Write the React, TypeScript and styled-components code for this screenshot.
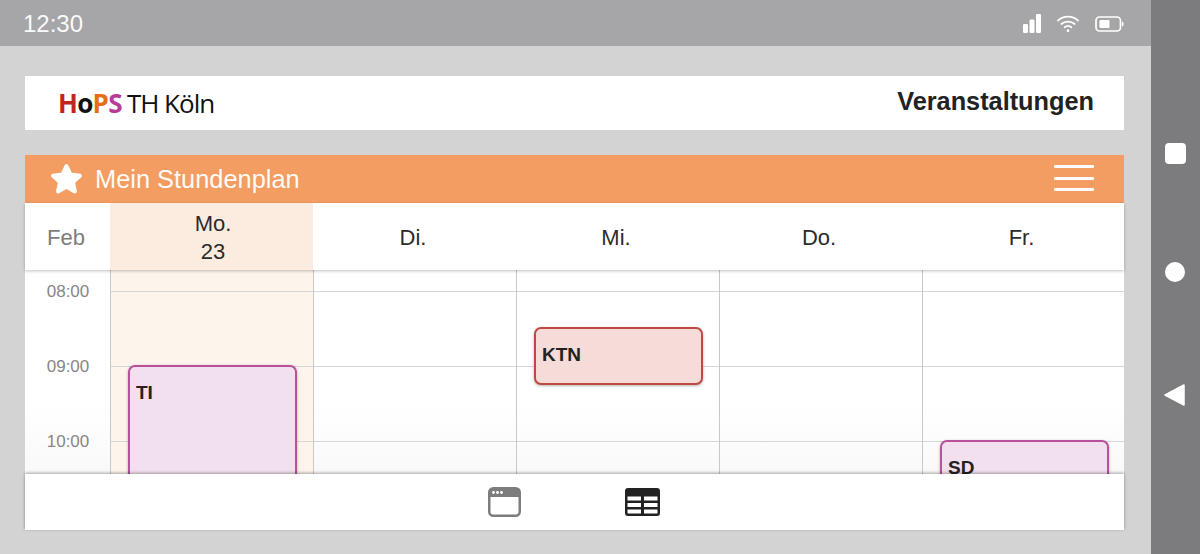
import styled, { createGlobalStyle } from "styled-components";

const GlobalStyle = createGlobalStyle`
    html, body {
        margin: 0;
        padding: 0;
        background: #d3d3d3;
    }
    body {
        font-family: "Liberation Sans", Arial, sans-serif;
    }
`;

const Device = styled.div`
    display: flex;
    width: 1200px;
    height: 554px;
    overflow: hidden;
`;

const Screen = styled.div`
    width: 1151px;
    display: flex;
    flex-direction: column;
    background: #d3d3d3;
`;

const StatusBar = styled.div`
    height: 46px;
    flex: none;
    box-sizing: border-box;
    display: flex;
    align-items: center;
    justify-content: space-between;
    padding: 2px 27px 0 23px;
    background: #a6a6a8;
    color: #fff;
`;

const Clock = styled.div`
    font-size: 24px;
    opacity: 0.95;
`;

const StatusIcons = styled.div`
    display: flex;
    align-items: center;
    gap: 16px;
    margin-top: -1px;
`;

const Content = styled.div`
    flex: 1;
    display: flex;
    flex-direction: column;
    padding: 30px 27px 24px 25px;
`;

const Header = styled.header`
    height: 54px;
    flex: none;
    display: flex;
    align-items: center;
    justify-content: space-between;
    padding: 0 30px 0 33px;
    margin-bottom: 25px;
    background: #fff;
`;

const Logo = styled.div`
    display: flex;
    align-items: baseline;
    gap: 5px;
    margin-top: -1px;
    font-family: "Open Sans", sans-serif;
    font-size: 26px;
    line-height: 54px;
    color: #111;
`;

const LogoMark = styled.span`
    font-weight: 700;
    letter-spacing: -0.7px;
`;

const LogoLetter = styled.span<{ $color: string }>`
    color: ${(p) => p.$color};
`;

const LogoName = styled.span`
    letter-spacing: -1px;
`;

const PageTitle = styled.h1`
    margin: 0 0 3px;
    font-size: 25.3px;
    font-weight: 700;
    color: #222;
`;

const TitleBar = styled.div`
    height: 48px;
    flex: none;
    display: flex;
    align-items: center;
    gap: 12px;
    padding: 0 30px 0 25px;
    background: #f39d63;
    color: #fff;
`;

const TitleText = styled.div`
    flex: 1;
    font-size: 25.4px;
    opacity: 0.95;
`;

const Burger = styled.div`
    width: 40px;
    display: flex;
    flex-direction: column;
    gap: 8.5px;
    margin-bottom: 2px;
`;

const BurgerLine = styled.span`
    display: block;
    height: 3px;
    border-radius: 1px;
    background: #fff;
`;

const DayHeader = styled.div`
    height: 67px;
    flex: none;
    display: grid;
    grid-template-columns: 85px 203px 203px 203px 203px 202px;
    background: #fff;
    box-shadow: 0 1px 3px rgba(0, 0, 0, 0.25);
    position: relative;
    z-index: 1;
`;

const MonthCell = styled.div`
    display: flex;
    align-items: center;
    justify-content: center;
    padding: 2px 3px 0 0;
    font-size: 22px;
    color: #7d7d7d;
`;

const DayCell = styled.div<{ $today?: boolean }>`
    display: flex;
    align-items: center;
    justify-content: center;
    padding: ${(p) => (p.$today ? "2px 0 0 3px" : "2px 3px 0 0")};
    font-size: 22px;
    line-height: 28px;
    text-align: center;
    color: #2b2b2b;
    background: ${(p) => (p.$today ? "#fcebdf" : "transparent")};
`;

const Body = styled.div`
    height: 204px;
    flex: none;
    display: grid;
    grid-template-columns: 85px 203px 203px 203px 203px 202px;
    overflow: hidden;
    background: linear-gradient(#fff 65%, #f9f9f9);
`;

const TimeColumn = styled.div`
    display: flex;
    flex-direction: column;
    align-items: center;
    padding: 10px 0 0 1px;
`;

const TimeLabel = styled.div`
    height: 75px;
    flex: none;
    line-height: 24px;
    font-size: 17px;
    color: #868686;
`;

const DayColumn = styled.div<{ $today?: boolean }>`
    position: relative;
    box-sizing: border-box;
    border-left: 1px solid #c8c8c8;
    background-color: ${(p) => (p.$today ? "#fdf4ec" : "transparent")};
    background-image: linear-gradient(#d6d6d6 1px, transparent 1px);
    background-size: 100% 75px;
    background-position: 0 21px;
`;

const Event = styled.div<{ $top: number; $height: number; $border: string; $fill: string }>`
    position: absolute;
    top: ${(p) => p.$top}px;
    left: 17px;
    width: 169px;
    height: ${(p) => p.$height}px;
    box-sizing: border-box;
    padding: 15px 6px;
    border: 2px solid ${(p) => p.$border};
    border-radius: 7px;
    background: ${(p) => p.$fill};
    box-shadow: 0 1px 3px rgba(0, 0, 0, 0.3);
    font-size: 19px;
    line-height: 22px;
    font-weight: 700;
    color: #222;
`;

const TabBar = styled.nav`
    height: 56px;
    flex: none;
    display: flex;
    align-items: center;
    justify-content: center;
    gap: 104px;
    padding-right: 2px;
    background: #fff;
    box-shadow: 0 -1px 3px rgba(0, 0, 0, 0.35);
    position: relative;
    z-index: 1;
`;

const SideNav = styled.div`
    flex: 1;
    display: flex;
    flex-direction: column;
    align-items: center;
    padding: 143px 0 0 0;
    background: #7c7c7e;
`;

const NavSquare = styled.div`
    width: 21px;
    height: 21px;
    margin-bottom: 98px;
    border-radius: 4px;
    background: #fff;
`;

const NavCircle = styled.div`
    width: 20px;
    height: 20px;
    margin: 0 1px 101px 0;
    border-radius: 50%;
    background: #fff;
`;

const BackGlyph = styled.svg`
    margin-right: 2px;
`;

const SignalIcon = () => (
    <svg width="18" height="19" viewBox="0 0 18 19">
        <rect x="0" y="10" width="5" height="9" rx="1.2" fill="#fff" />
        <rect x="6.5" y="5.5" width="5" height="13.5" rx="1.2" fill="#fff" />
        <rect x="13" y="0" width="5" height="19" rx="1.2" fill="#fff" />
    </svg>
);

const WifiIcon = () => (
    <svg width="22" height="18" viewBox="0 0 23 18" fill="none" stroke="#fff" strokeWidth="1.8" strokeLinecap="round">
        <path d="M1 5.5C7 0 16 0 22 5.5" />
        <path d="M4.5 9C8.5 5.6 14.5 5.6 18.5 9" />
        <path d="M8 12.4C10 10.8 13 10.8 15 12.4" />
        <circle cx="11.5" cy="16" r="1.4" fill="#fff" stroke="none" />
    </svg>
);

const BatteryIcon = () => (
    <svg width="29" height="16" viewBox="0 0 29 16">
        <rect x="1" y="1" width="24.5" height="14" rx="3.5" fill="none" stroke="#fff" strokeWidth="1.7" />
        <rect x="4.5" y="4" width="10" height="8" rx="1" fill="#fff" />
        <path d="M27 5.5c1.2.6 1.6 1.4 1.6 2.5s-.4 1.9-1.6 2.5z" fill="#fff" />
    </svg>
);

const StarIcon = () => (
    <svg width="33" height="32" viewBox="0 0 33 32">
        <path
            d="M16.5 3l4 8.6 9.5 1.1-7 6.4 1.9 9.3-8.4-4.7-8.4 4.7 1.9-9.3-7-6.4 9.5-1.1z"
            fill="#fff"
            stroke="#fff"
            strokeWidth="4"
            strokeLinejoin="round"
        />
    </svg>
);

const WindowIcon = () => (
    <svg width="33" height="30" viewBox="0 0 33 30">
        <rect x="1.25" y="1.25" width="30.5" height="27.5" rx="4" fill="#fff" stroke="#7d7d7d" strokeWidth="2.5" />
        <path d="M1 10V5a4 4 0 0 1 4-4h23a4 4 0 0 1 4 4v5z" fill="#7d7d7d" />
        <circle cx="5.5" cy="5.5" r="1.4" fill="#fff" />
        <circle cx="9.5" cy="5.5" r="1.4" fill="#fff" />
        <circle cx="13.5" cy="5.5" r="1.4" fill="#fff" />
    </svg>
);

const TableIcon = () => (
    <svg width="35" height="28" viewBox="0 0 35 28">
        <rect width="35" height="28" rx="3" fill="#222" />
        <rect x="2.5" y="8.5" width="13.5" height="4" fill="#fff" />
        <rect x="19" y="8.5" width="13.5" height="4" fill="#fff" />
        <rect x="2.5" y="15" width="13.5" height="4" fill="#fff" />
        <rect x="19" y="15" width="13.5" height="4" fill="#fff" />
        <rect x="2.5" y="21.5" width="13.5" height="4" fill="#fff" />
        <rect x="19" y="21.5" width="13.5" height="4" fill="#fff" />
    </svg>
);

const BackIcon = () => (
    <BackGlyph width="22" height="24" viewBox="0 0 22 24">
        <path d="M1 12L20 2v20z" fill="#fff" stroke="#fff" strokeWidth="1.5" strokeLinejoin="round" />
    </BackGlyph>
);

const PINK = { border: "#b9509c", fill: "#f2e0ee" };
const RED = { border: "#c04a42", fill: "#f6dcd9" };

export default function App() {
    return (
        <Device>
            <GlobalStyle />
            <Screen>
                <StatusBar>
                    <Clock>12:30</Clock>
                    <StatusIcons>
                        <SignalIcon />
                        <WifiIcon />
                        <BatteryIcon />
                    </StatusIcons>
                </StatusBar>
                <Content>
                    <Header>
                        <Logo>
                            <LogoMark>
                                <LogoLetter $color="#c3241c">H</LogoLetter>
                                <LogoLetter $color="#111">o</LogoLetter>
                                <LogoLetter $color="#ea6d12">P</LogoLetter>
                                <LogoLetter $color="#b83c97">S</LogoLetter>
                            </LogoMark>
                            <LogoName>TH Köln</LogoName>
                        </Logo>
                        <PageTitle>Veranstaltungen</PageTitle>
                    </Header>
                    <TitleBar>
                        <StarIcon />
                        <TitleText>Mein Stundenplan</TitleText>
                        <Burger>
                            <BurgerLine />
                            <BurgerLine />
                            <BurgerLine />
                        </Burger>
                    </TitleBar>
                    <DayHeader>
                        <MonthCell>Feb</MonthCell>
                        <DayCell $today>
                            Mo.
                            <br />
                            23
                        </DayCell>
                        <DayCell>Di.</DayCell>
                        <DayCell>Mi.</DayCell>
                        <DayCell>Do.</DayCell>
                        <DayCell>Fr.</DayCell>
                    </DayHeader>
                    <Body>
                        <TimeColumn>
                            <TimeLabel>08:00</TimeLabel>
                            <TimeLabel>09:00</TimeLabel>
                            <TimeLabel>10:00</TimeLabel>
                        </TimeColumn>
                        <DayColumn $today>
                            <Event $top={95} $height={180} $border={PINK.border} $fill={PINK.fill}>
                                TI
                            </Event>
                        </DayColumn>
                        <DayColumn />
                        <DayColumn>
                            <Event $top={57} $height={58} $border={RED.border} $fill={RED.fill}>
                                KTN
                            </Event>
                        </DayColumn>
                        <DayColumn />
                        <DayColumn>
                            <Event $top={170} $height={180} $border={PINK.border} $fill={PINK.fill}>
                                SD
                            </Event>
                        </DayColumn>
                    </Body>
                    <TabBar>
                        <WindowIcon />
                        <TableIcon />
                    </TabBar>
                </Content>
            </Screen>
            <SideNav>
                <NavSquare />
                <NavCircle />
                <BackIcon />
            </SideNav>
        </Device>
    );
}
